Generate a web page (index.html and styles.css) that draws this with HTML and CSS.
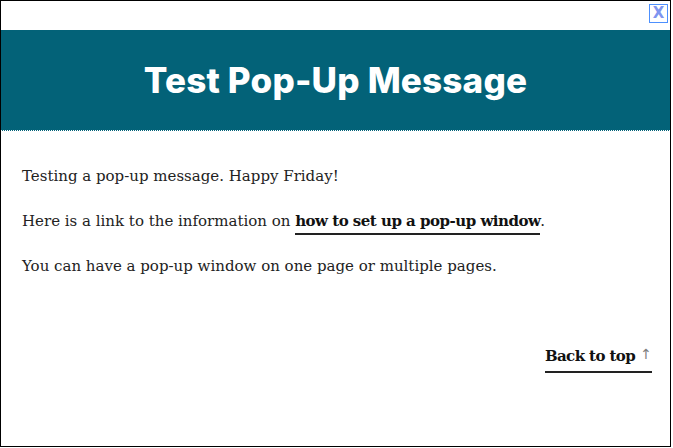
FILE: index.html
```html
<!DOCTYPE html>
<html lang="en">
<head>
<meta charset="utf-8">
<title>Test Pop-Up Message</title>
<link rel="stylesheet" href="styles.css">
</head>
<body>
<div class="frame">
  <div class="topbar">
    <button class="close" type="button">X</button>
  </div>
  <header class="banner">
    <h1 class="title">Test Pop-Up Message</h1>
  </header>
  <main class="content">
    <p>Testing a pop-up message. Happy Friday!</p>
    <p>Here is a link to the information on <a class="link" href="#">how to set up a pop-up window</a>.</p>
    <p>You can have a pop-up window on one page or multiple pages.</p>
    <div class="backrow">
      <a class="backtop" href="#"><span class="backtext">Back to top</span> <span class="arrow">&#8593;</span></a>
    </div>
  </main>
</div>
</body>
</html>
```
FILE: styles.css
```css
html, body {
  margin: 0;
  padding: 0;
  background: #fff;
}
.frame {
  box-sizing: border-box;
  width: 671px;
  height: 447px;
  border: 1px solid #000;
  display: flex;
  flex-direction: column;
}
.topbar {
  height: 29px;
  display: flex;
  justify-content: flex-end;
  align-items: flex-start;
  padding: 3px 2px 0 0;
  box-sizing: border-box;
}
.close {
  width: 19px;
  height: 19px;
  padding: 0;
  margin: 0;
  border: 1px solid #4d90fe;
  background: #fff;
  color: #7f95f0;
  font-family: "DejaVu Sans", "Liberation Sans", sans-serif;
  font-weight: bold;
  font-size: 15px;
  line-height: 17px;
  text-align: center;
}
.banner {
  background: #036278;
  height: 101px;
  box-sizing: border-box;
  border-bottom: 1px dotted #fff;
  display: flex;
  align-items: center;
  justify-content: center;
}
.title {
  margin: 0;
  color: #fff;
  font-family: Inter, "Liberation Sans", sans-serif;
  font-weight: 800;
  font-size: 35px;
  letter-spacing: 0.2px;
}
.content {
  padding: 34px 18px 0 21px;
  font-family: "DejaVu Serif", "Liberation Serif", serif;
  font-size: 15px;
  color: #222;
  flex: 1;
}
.content p {
  margin: 0 0 23px 0;
  line-height: 22px;
}
.link {
  color: #111;
  font-weight: bold;
  letter-spacing: -0.5px;
  text-decoration: none;
  border-bottom: 2px solid #222;
  padding-bottom: 3px;
}
.backrow {
  display: flex;
  justify-content: flex-end;
  margin-top: 69px;
}
.backtop {
  color: #111;
  font-weight: bold;
  text-decoration: none;
  border-bottom: 2px solid #222;
  padding-bottom: 6px;
}
.backtext {
  letter-spacing: -0.6px;
}
.arrow {
  color: #808080;
  font-weight: normal;
  font-family: "DejaVu Sans", sans-serif;
  font-size: 14px;
  vertical-align: 2px;
}
```
